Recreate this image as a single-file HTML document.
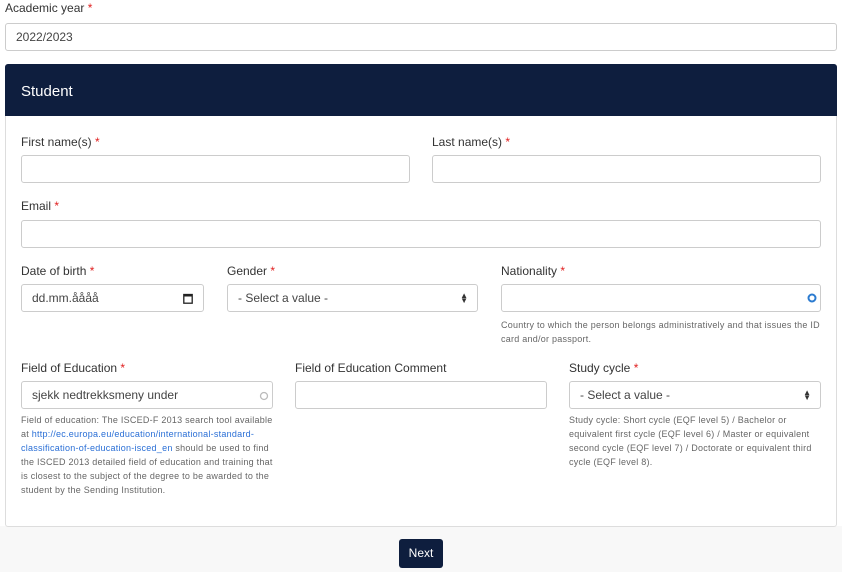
<!DOCTYPE html><html><head><style>
*{box-sizing:border-box;margin:0;padding:0}
body{width:842px;height:572px;background:#fff;font-family:"Liberation Sans",sans-serif;color:#333;position:relative;overflow:hidden;font-size:12px}
.a{position:absolute}
.l{position:absolute;font-size:12px;color:#333;white-space:nowrap}
.l b{color:#e02020;font-weight:normal}
.i{position:absolute;border:1px solid #ccc;border-radius:3px;background:#fff;height:28px;font-size:12px;color:#444;padding:0 10px;line-height:27px}
.h{position:absolute;font-size:9px;color:#666;line-height:14px;letter-spacing:0.25px}
.h a{color:#2a6fd6;text-decoration:none}
.arr{position:absolute;right:9px;top:8px;font-size:8px;line-height:5px;color:#333}
</style></head><body>
<div class="a" style="left:0;top:526px;width:842px;height:46px;background:#f8f8f8"></div>
<div class="l" style="left:5px;top:1px">Academic year <b>*</b></div>
<div class="i" style="left:5px;top:23px;width:832px;height:28px">2022/2023</div>
<div class="a" style="left:5px;top:64px;width:832px;height:463px;border:1px solid #ddd;border-radius:3px;background:#fff"></div>
<div class="a" style="left:5px;top:64px;width:832px;height:52px;background:#0e1e3e;border-radius:3px 3px 0 0;color:#fff;font-size:15px;padding:19px 0 0 16px">Student</div>
<div class="l" style="left:21px;top:135px">First name(s) <b>*</b></div>
<div class="i" style="left:21px;top:155px;width:389px"></div>
<div class="l" style="left:432px;top:135px">Last name(s) <b>*</b></div>
<div class="i" style="left:432px;top:155px;width:389px"></div>
<div class="l" style="left:21px;top:199px">Email <b>*</b></div>
<div class="i" style="left:21px;top:220px;width:800px"></div>
<div class="l" style="left:21px;top:264px">Date of birth <b>*</b></div>
<div class="i" style="left:21px;top:284px;width:183px">dd.mm.åååå<svg class="a" style="right:10px;top:8px" width="10" height="11" viewBox="0 0 10 11"><rect x="0.8" y="1.5" width="8.4" height="8.7" fill="none" stroke="#222" stroke-width="1.3"/><rect x="0.8" y="1.5" width="8.4" height="2" fill="#222"/></svg></div>
<div class="l" style="left:227px;top:264px">Gender <b>*</b></div>
<div class="i" style="left:227px;top:284px;width:251px">- Select a value -<div class="arr">▲<br>▼</div></div>
<div class="l" style="left:501px;top:264px">Nationality <b>*</b></div>
<div class="i" style="left:501px;top:284px;width:320px"><svg class="a" style="right:3px;top:8px" width="10" height="10"><circle cx="5" cy="5" r="3.5" fill="none" stroke="#2b7bd0" stroke-width="2"/></svg></div>
<div class="h" style="left:501px;top:318px;width:320px">Country to which the person belongs administratively and that issues the ID card and/or passport.</div>
<div class="l" style="left:21px;top:361px">Field of Education <b>*</b></div>
<div class="i" style="left:21px;top:381px;width:252px">sjekk nedtrekksmeny under<svg class="a" style="right:3px;top:9px" width="10" height="10"><circle cx="5" cy="5" r="3.5" fill="none" stroke="#bbb" stroke-width="1.3"/></svg></div>
<div class="h" style="left:21px;top:413px;width:252px">Field of education: The ISCED-F 2013 search tool available at <a>http://ec.europa.eu/education/international-standard-classification-of-education-isced_en</a> should be used to find the ISCED 2013 detailed field of education and training that is closest to the subject of the degree to be awarded to the student by the Sending Institution.</div>
<div class="l" style="left:295px;top:361px">Field of Education Comment</div>
<div class="i" style="left:295px;top:381px;width:252px"></div>
<div class="l" style="left:569px;top:361px">Study cycle <b>*</b></div>
<div class="i" style="left:569px;top:381px;width:252px">- Select a value -<div class="arr">▲<br>▼</div></div>
<div class="h" style="left:569px;top:413px;width:245px">Study cycle: Short cycle (EQF level 5) / Bachelor or equivalent first cycle (EQF level 6) / Master or equivalent second cycle (EQF level 7) / Doctorate or equivalent third cycle (EQF level 8).</div>
<div class="a" style="left:399px;top:539px;width:44px;height:29px;background:#0e1e3e;border-radius:3px;color:#fff;font-size:12px;text-align:center;line-height:29px">Next</div>
</body></html>
